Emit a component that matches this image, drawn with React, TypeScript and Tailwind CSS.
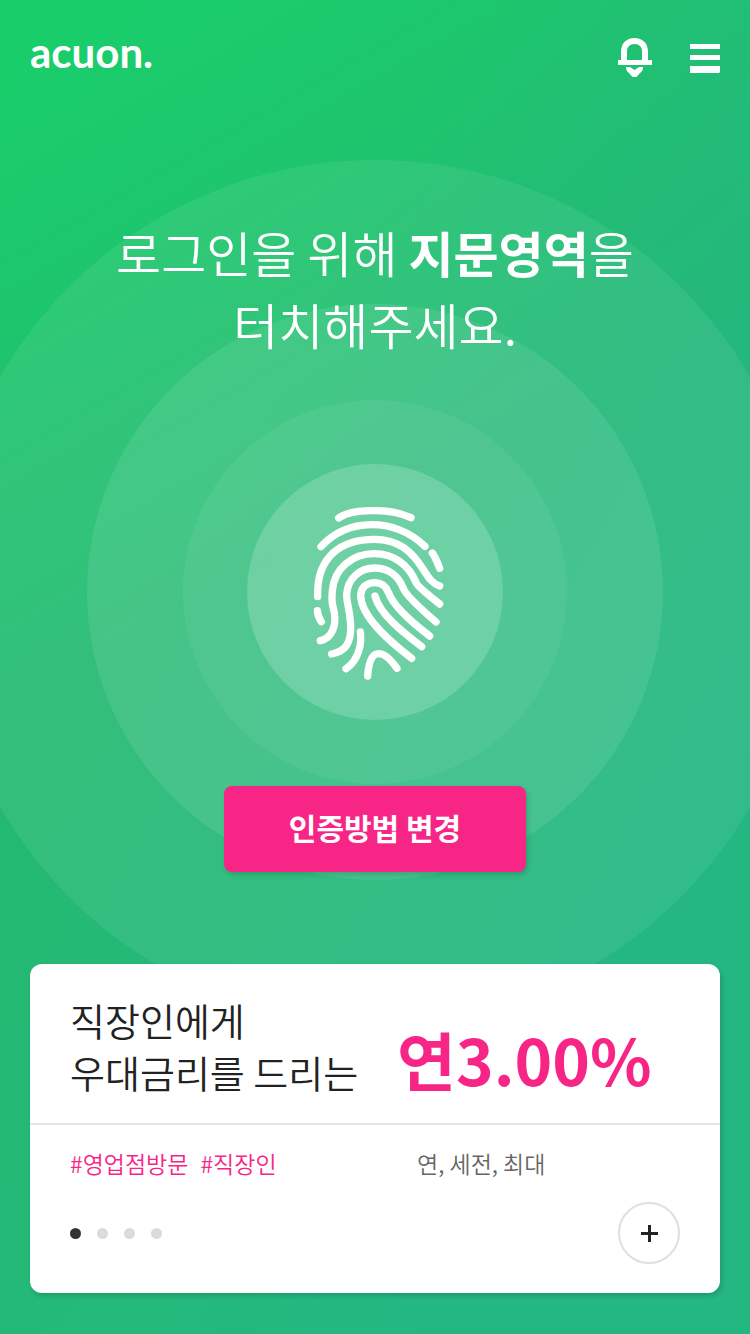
const rings = ["size-[864px] bg-white/7", "size-[576px] bg-white/9", "size-[384px] bg-white/6"];

const slides = ["직장인 대출", "우대 금리", "영업점 안내", "이벤트"];

const ridges = [
  "M143 84Q176 61 246 62Q310 60 360 83",
  "M90 170C165 84 310 80 402 169",
  "M80 320C76 200 150 148 250 148C325 148 363 186 396 237C414 266 424 280 446 288",
  "M424 189Q434 203 446 235",
  "M79 362Q81 382 91 395",
  "M88 452C125 444 136 405 130 368C122 335 122 330 124 303C129 235 185 191 250 191C310 191 354 226 376 279Q380 290 446 342",
  "M122 492C162 484 181 462 179 405C176 350 167 345 167 314C169 266 207 234 251 234C292 234 322 257 337 295Q345 318 435 396",
  "M362 505C310 465 209 385 209 315C210 290 230 278 251 278C274 278 286 292 292 307C304 341 350 388 416 438",
  "M252 318C266 372 330 422 392 470",
  "M208 426C213 462 203 510 165 536",
  "M230 558C233 515 244 491 263 491C283 491 301 511 318 535",
];

function Fingerprint() {
  return (
    <svg
      viewBox="0 0 504 612"
      className="h-[204px] w-[168px]"
      fill="none"
      stroke="currentColor"
      strokeWidth="22"
      strokeLinecap="round"
      aria-hidden="true"
    >
      {ridges.map((d) => (
        <path d={d} key={d} />
      ))}
    </svg>
  );
}

function Header() {
  return (
    <header className="flex h-[116px] items-center justify-between px-[30px]">
      <a
        href="#home"
        className="pb-3 font-['Lato','Liberation_Sans',sans-serif] text-[42px] leading-[48px] font-bold"
      >
        acuon.
      </a>
      <div className="flex items-center gap-[38px]">
        <button type="button" aria-label="알림">
          <svg viewBox="0 0 34 40" className="h-10 w-[34px]" fill="none" stroke="currentColor">
            <path d="M6 23V14C6 7 10 3 16.500 3S27 7 27 14V23" strokeWidth="6" />
            <path d="M0 24.500H34" strokeWidth="5" />
            <path
              d="M8 29H12L16.500 32L21 29H25Q25 33 22 35L18.500 39H14.500L11 35Q8 33 8 29Z"
              fill="currentColor"
              stroke="none"
            />
          </svg>
        </button>
        <button type="button" aria-label="메뉴">
          <svg viewBox="0 0 30 29" className="h-[29px] w-[30px]" fill="currentColor">
            <path d="M0 0H30V5H0ZM0 11H30V16H0ZM0 22H30V28L29 29H0Z" />
          </svg>
        </button>
      </div>
    </header>
  );
}

function RateCard() {
  return (
    <section className="mx-[30px] mb-[41px] rounded-xl bg-white text-[#222] shadow-[2px_3px_5px_rgba(0,0,0,0.15)]">
      <div className="grid grid-cols-[327px_1fr] items-end border-b-2 border-[#e6e6e6] px-10 pt-[30px] pb-[25px]">
        <h2 className="text-[38px] leading-[52px] font-[350] whitespace-nowrap">
          직장인에게
          <br />
          우대금리를 드리는
        </h2>
        <p className="pb-1 text-[64px] leading-[72px] font-bold whitespace-nowrap text-[#f72585]">
          연3.00%
        </p>
      </div>

      <div className="px-10 pt-[22px] pb-[29px]">
        <div className="grid grid-cols-[327px_1fr] text-[23px] leading-8 font-[350]">
          <p className="flex gap-3 text-[#f72585]">
            <a href="#branch">#영업점방문</a>
            <a href="#worker">#직장인</a>
          </p>
          <p className="pl-5 text-[#666]">연, 세전, 최대</p>
        </div>

        <div className="mt-[23px] flex items-center justify-between">
          <div className="flex gap-4">
            {slides.map((slide, index) => (
              <button
                type="button"
                aria-label={slide}
                key={slide}
                className={`size-[11px] rounded-full ${index === 0 ? "bg-[#333]" : "bg-[#dbdbdb]"}`}
              />
            ))}
          </div>
          <button
            type="button"
            aria-label="더보기"
            className="flex size-[62px] items-center justify-center rounded-full border-2 border-[#dfdfdf]"
          >
            <svg viewBox="0 0 17 17" className="size-[17px]" fill="currentColor">
              <path d="M7 0H10V7H17V10H10V17H7V10H0V7H7Z" />
            </svg>
          </button>
        </div>
      </div>
    </section>
  );
}

export default function App() {
  return (
    <div className="relative isolate flex min-h-screen flex-col overflow-hidden bg-[linear-gradient(120deg,#24b78300_32%,#24b782_78%),linear-gradient(150deg,#1acd6b_5%,#24b971_42%,#25bb71_100%)] font-['Noto_Sans_CJK_KR',sans-serif] text-white">
      <Header />

      <main className="flex flex-1 flex-col">
        <div className="flex flex-1 flex-col items-center pt-[100px] pb-[92px]">
          <h1 className="text-center text-[49px] leading-[72px] font-[350]">
            로그인을 위해 <strong className="font-bold">지문영역</strong>을
            <br />
            터치해주세요.
          </h1>

          <div className="relative mt-[104px]">
            {rings.map((ring) => (
              <span
                key={ring}
                className={`absolute top-1/2 left-1/2 -z-10 -translate-1/2 rounded-full ${ring}`}
              />
            ))}
            <button
              type="button"
              aria-label="지문 인증"
              className="flex size-64 items-center justify-center rounded-full bg-white/18"
            >
              <Fingerprint />
            </button>
          </div>

          <button
            type="button"
            className="mt-[66px] h-[86px] w-[302px] rounded-lg bg-[#f72585] pb-1 text-[30px] font-bold shadow-[2px_3px_5px_rgba(0,0,0,0.15)]"
          >
            인증방법 변경
          </button>
        </div>

        <RateCard />
      </main>
    </div>
  );
}
